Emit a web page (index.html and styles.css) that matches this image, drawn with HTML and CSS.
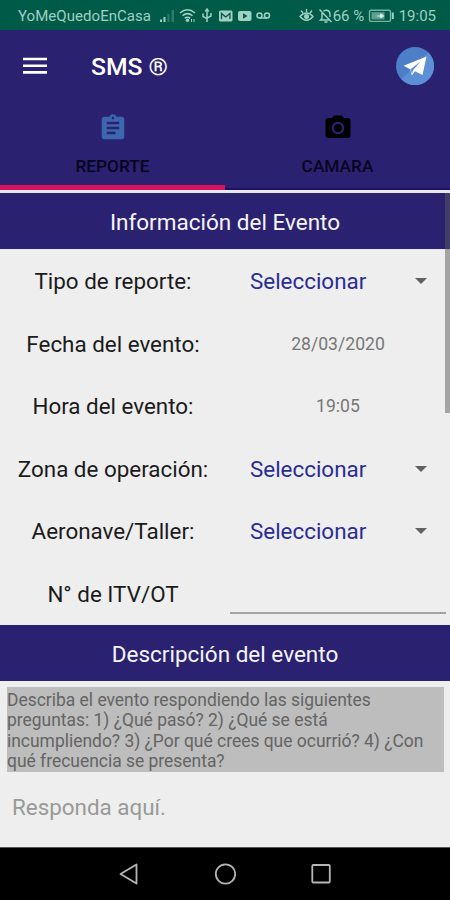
FILE: index.html
```html
<!DOCTYPE html>
<html lang="es">
<head>
<meta charset="utf-8">
<title>SMS</title>
<link rel="stylesheet" href="styles.css">
</head>
<body>
<div class="phone">
  <div class="status">
    <span class="carrier">YoMeQuedoEnCasa</span>
    <svg class="status-icons" width="116" height="30" viewBox="0 0 116 30">
      <g fill="#9fd0c2">
        <path d="M5 19.500h2v2.500H5zM8.500 17h2v5h-2z"/>
        <path d="M12.500 14h2v8h-2zM16.500 10h2.500v12h-2.500z" opacity=".28"/>
        <circle cx="32.500" cy="20.300" r="1.700"/>
        <rect x="64" y="10.500" width="13.500" height="11" rx="1.500"/>
        <rect x="83" y="11" width="13.500" height="10" rx="2"/>
      </g>
      <g fill="none" stroke="#9fd0c2" stroke-width="1.500">
        <path d="M25 13q7.500-6.500 15 0M27.500 15.800q5-4.300 10 0M29.800 18.300q2.700-2.200 5.400 0"/>
        <path d="M36.500 19v3M39 19v3" stroke-width="1"/>
        <path d="M52 10v12M48 13.500v3l4 2.200M56 13v3l-4 2.200"/>
        <path d="M50.300 11.500L52 9l1.700 2.500" />
        <circle cx="104.500" cy="15.500" r="2.500"/><circle cx="112" cy="15.500" r="2.500"/><path d="M104.500 18h7.500"/>
      </g>
      <path d="M66.500 19v-5.500l4.200 3.500 4.200-3.500V19" fill="none" stroke="#005a48" stroke-width="1.300"/>
      <path d="M88 13.300v5.400l4.500-2.700z" fill="#005a48"/>
    </svg>
    <span class="spacer"></span>
    <svg class="alert-icons" width="36" height="30" viewBox="0 0 36 30">
      <g fill="none" stroke="#9fd0c2" stroke-width="1.400">
        <path d="M1 16.500q6.500-7 13 0q-6.500 7.500-13 0zM2 10.500l2 2.500M7.500 9v3M13 10.500l-2 2.500"/>
        <circle cx="7.500" cy="16.500" r="1.800" fill="#9fd0c2"/>
        <path d="M20.500 9.500l12 12.500M23 13v5.500l-1.500 1.500h9M24.500 11.200q2-1.500 4.200-.7q2.300 1 2.300 4v2.500M25.500 22h3"/>
      </g>
    </svg>
    <span class="battery-text">66 %</span>
    <svg class="battery" width="27" height="30" viewBox="0 0 27 30">
      <rect x="1.500" y="10.200" width="21" height="11.200" rx="1.500" fill="none" stroke="#75b3a3" stroke-width="1.400"/>
      <rect x="3.500" y="12.200" width="13" height="7.200" fill="#5f9f90"/>
      <path d="M7 16l5-.8.500-2.200 4 3-4 2.500-.5-1.800z" fill="#d2eee6"/>
      <path d="M24.800 12.500v6.500" stroke="#9fd0c2" stroke-width="2"/>
    </svg>
    <span class="clock">19:05</span>
  </div>

  <header class="appbar">
    <svg class="menu" width="24" height="18" viewBox="0 0 24 18"><path d="M0 2h24M0 8.700h24M0 15.400h24" stroke="#fff" stroke-width="2.600"/></svg>
    <h1 class="title">SMS ®</h1>
    <svg class="send" width="38" height="38" viewBox="0 0 38 38">
      <circle cx="19" cy="19" r="19" fill="#4d7fc9"/>
      <path d="M5.500 32.500L32.500 5.500A19 19 0 0 1 5.500 32.500z" fill="#5c90d6"/>
      <path d="M7.500 18.800L30.500 9.500 26.500 28 19 24.300 15.800 28.500 14.300 22.200z" fill="#fff"/>
      <path d="M14.500 22.300L24.500 14.500 17 23.200 16 27z" fill="#5c90d6"/>
    </svg>
  </header>

  <nav class="tabs">
    <div class="tab active">
      <svg width="30" height="30" viewBox="0 0 24 24"><path fill="#3c66ae" d="M19 3h-4.180C14.400 1.840 13.300 1 12 1c-1.300 0-2.400.84-2.820 2H5c-1.100 0-2 .9-2 2v14c0 1.100.9 2 2 2h14c1.100 0 2-.9 2-2V5c0-1.100-.9-2-2-2zm-7 0c.55 0 1 .45 1 1s-.45 1-1 1-1-.45-1-1 .45-1 1-1zm2 14H7v-2h7v2zm3-4H7v-2h10v2zm0-4H7V7h10v2z"/></svg>
      <span>REPORTE</span>
    </div>
    <div class="tab">
      <svg width="30" height="30" viewBox="0 0 24 24"><path fill="#000" d="M9 2L7.170 4H4c-1.100 0-2 .9-2 2v12c0 1.100.9 2 2 2h16c1.100 0 2-.9 2-2V6c0-1.100-.9-2-2-2h-3.170L15 2H9zm3 15c-2.760 0-5-2.240-5-5s2.240-5 5-5 5 2.240 5 5-2.240 5-5 5z"/><circle cx="12" cy="12" r="3.200"/></svg>
      <span>CAMARA</span>
    </div>
  </nav>

  <main class="content">
    <h2 class="section">Información del Evento</h2>
    <div class="form">
      <div class="row"><label>Tipo de reporte:</label><div class="select"><span>Seleccionar</span><i class="caret"></i></div></div>
      <div class="row"><label>Fecha del evento:</label><div class="value">28/03/2020</div></div>
      <div class="row"><label>Hora del evento:</label><div class="value">19:05</div></div>
      <div class="row"><label>Zona de operación:</label><div class="select"><span>Seleccionar</span><i class="caret"></i></div></div>
      <div class="row"><label>Aeronave/Taller:</label><div class="select"><span>Seleccionar</span><i class="caret"></i></div></div>
      <div class="row"><label>N° de ITV/OT</label><div class="input"></div></div>
    </div>
    <h2 class="section">Descripción del evento</h2>
    <div class="description">
      <p class="hint">Describa el evento respondiendo las siguientes<br>preguntas: 1) ¿Qué pasó? 2) ¿Qué se está<br>incumpliendo? 3) ¿Por qué crees que ocurrió? 4) ¿Con<br>qué frecuencia se presenta?</p>
      <div class="answer">Responda aquí.</div>
    </div>
    <div class="scrollbar"></div>
  </main>

  <footer class="navbar">
    <svg width="22" height="24" viewBox="0 0 22 24"><path d="M18.500 2.500v19L2.500 12z" fill="none" stroke="#b5b5b5" stroke-width="1.800" stroke-linejoin="round"/></svg>
    <svg width="22" height="24" viewBox="0 0 22 24"><circle cx="11.500" cy="12" r="9.700" fill="none" stroke="#b5b5b5" stroke-width="1.800"/></svg>
    <svg width="22" height="24" viewBox="0 0 22 24"><rect x="2.300" y="3" width="17.500" height="17.500" rx="1" fill="none" stroke="#b5b5b5" stroke-width="1.800"/></svg>
  </footer>
</div>
</body>
</html>
```
FILE: styles.css
```css
* { box-sizing: border-box; }
body { margin: 0; font-family: Roboto, "Liberation Sans", sans-serif; }
.phone { width: 450px; height: 900px; display: flex; flex-direction: column; background: #eee; overflow: hidden; }
.status { height: 30px; flex: none; display: flex; align-items: center; padding: 0 14px 0 18px; background: #005a48; color: #9fd0c2; font-size: 15px; white-space: nowrap; }
.status span { padding-top: 2px; }
.carrier { width: 137px; letter-spacing: .05px; }
.spacer { flex: 1; }
.alert-icons { margin-right: -2px; margin-left: -2px; }
.battery-text { width: 35px; }
.battery { margin-right: 4px; }
.appbar { height: 73px; flex: none; display: flex; align-items: center; padding: 0 16px 2px 23px; background: #2b2171; }
.title { flex: 1; margin: 2px 0 0 44px; color: #fff; font-size: 24.700px; font-weight: 500; }
.tabs { height: 87px; flex: none; display: flex; background: #2b2171; }
.tab { flex: 1; display: flex; flex-direction: column; align-items: center; padding-top: 10px; gap: 13px; color: #08061c; font-size: 17.300px; font-weight: 500; line-height: 20px; border-bottom: 2px solid #1d1168; }
.tab.active { border-bottom: 5px solid #d71360; }
.content { position: relative; flex: 1; padding-top: 3px; background: #e9e8f1; display: flex; flex-direction: column; }
.section { height: 56px; flex: none; margin: 0; display: flex; align-items: center; justify-content: center; padding-top: 1px; background: #2b2171; color: #f5f4fa; font-size: 22.500px; font-weight: 400; }
.form { height: 375px; flex: none; display: grid; grid-template-rows: repeat(6, 1fr); margin-top: 1px; background: #eee; }
.row { display: grid; grid-template-columns: 226px 1fr; align-items: center; }
.row label { text-align: center; font-size: 22.400px; color: #1b1b1b; }
.select { display: flex; align-items: center; justify-content: space-between; padding: 0 23px 0 24px; color: #2a2d94; font-size: 22.400px; }
.caret { border: 6px solid transparent; border-top: 6px solid #616161; border-bottom: 0; }
.value { text-align: center; color: #777; font-size: 17.600px; }
.input { align-self: end; margin: 0 4px 11px; border-bottom: 2px solid #a4a4a4; }
.description { flex: 1; background: #eee; padding: 6px 6px 0 7px; }
.hint { height: 85px; margin: 0; padding-top: 3px; background: #bdbdbd; color: #646464; font-size: 17.450px; line-height: 20.400px; white-space: nowrap; }
.answer { padding: 22px 0 0 5px; font-size: 22.400px; color: #999; }
.scrollbar { position: absolute; top: 3px; right: 0; width: 5px; height: 220px; background: rgba(90,90,90,.5); }
.navbar { height: 53px; flex: none; display: flex; justify-content: center; align-items: center; gap: 74px; background: #000; border-top: 1px solid #555; }
```
